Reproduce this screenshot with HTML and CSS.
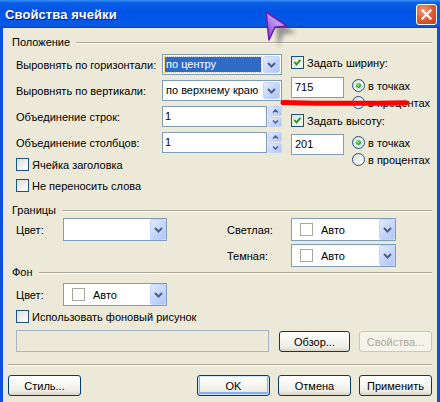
FILE: index.html
```html
<!DOCTYPE html>
<html lang="ru">
<head>
<meta charset="utf-8">
<title>Свойства ячейки</title>
<link rel="stylesheet" href="styles.css">
</head>
<body>
<div class="window">
  <div class="titlebar">
    <span class="title">Свойства ячейки</span>
    <span class="close"><svg width="11" height="11" viewBox="0 0 11 11"><path d="M1.5 1.5 L9.5 9.5 M9.5 1.5 L1.5 9.5" stroke="#fff" stroke-width="2.2" stroke-linecap="square"/></svg></span>
  </div>
  <div class="frame">
    <div class="content">
      <div class="group-head"><span>Положение</span><i class="rule"></i></div>
      <div class="position">
        <div class="pos-left">
          <div class="row">
            <span class="lbl">Выровнять по горизонтали:</span>
            <div class="select"><span class="sel-text focused">по центру</span><span class="dd"><svg width="9" height="6" viewBox="0 0 9 6"><path d="M1 1 L4.5 4.5 L8 1" fill="none" stroke="#4D6185" stroke-width="2"/></svg></span></div>
          </div>
          <div class="row">
            <span class="lbl">Выровнять по вертикали:</span>
            <div class="select"><span class="sel-text">по верхнему краю</span><span class="dd"><svg width="9" height="6" viewBox="0 0 9 6"><path d="M1 1 L4.5 4.5 L8 1" fill="none" stroke="#4D6185" stroke-width="2"/></svg></span></div>
          </div>
          <div class="row">
            <span class="lbl">Объединение строк:</span>
            <div class="spin"><span class="spin-text">1</span><span class="spin-btns"><span class="sb"><svg width="7" height="4" viewBox="0 0 7 4"><path d="M1 3.5 L3.5 1 L6 3.5" fill="none" stroke="#4D6185" stroke-width="1.5"/></svg></span><span class="sb"><svg width="7" height="4" viewBox="0 0 7 4"><path d="M1 0.5 L3.5 3 L6 0.5" fill="none" stroke="#4D6185" stroke-width="1.5"/></svg></span></span></div>
          </div>
          <div class="row">
            <span class="lbl">Объединение столбцов:</span>
            <div class="spin"><span class="spin-text">1</span><span class="spin-btns"><span class="sb"><svg width="7" height="4" viewBox="0 0 7 4"><path d="M1 3.5 L3.5 1 L6 3.5" fill="none" stroke="#4D6185" stroke-width="1.5"/></svg></span><span class="sb"><svg width="7" height="4" viewBox="0 0 7 4"><path d="M1 0.5 L3.5 3 L6 0.5" fill="none" stroke="#4D6185" stroke-width="1.5"/></svg></span></span></div>
          </div>
          <div class="cbrow"><span class="cb"></span><span>Ячейка заголовка</span></div>
          <div class="cbrow second"><span class="cb"></span><span>Не переносить слова</span></div>
        </div>
        <div class="pos-right">
          <div class="cbrow"><span class="cb"><svg width="11" height="11" viewBox="0 0 11 11"><path d="M2.5 5 L4.5 7.5 L8.5 2.8" fill="none" stroke="#21A121" stroke-width="2"/></svg></span><span>Задать ширину:</span></div>
          <div class="sizerow">
            <span class="num">715</span>
            <div class="radios">
              <div class="rrow"><span class="radio on"></span><span>в точках</span></div>
              <div class="rrow"><span class="radio"></span><span>в процентах</span></div>
            </div>
          </div>
          <div class="cbrow gap5"><span class="cb"><svg width="11" height="11" viewBox="0 0 11 11"><path d="M2.5 5 L4.5 7.5 L8.5 2.8" fill="none" stroke="#21A121" stroke-width="2"/></svg></span><span>Задать высоту:</span></div>
          <div class="sizerow gap7">
            <span class="num">201</span>
            <div class="radios">
              <div class="rrow"><span class="radio on"></span><span>в точках</span></div>
              <div class="rrow"><span class="radio"></span><span>в процентах</span></div>
            </div>
          </div>
        </div>
      </div>

      <div class="group-head borders-head"><span>Границы</span><i class="rule"></i></div>
      <div class="borders">
        <span class="lbl">Цвет:</span>
        <div class="color"><span class="ctext"></span><span class="dd tall"><svg width="9" height="6" viewBox="0 0 9 6"><path d="M1 1 L4.5 4.5 L8 1" fill="none" stroke="#4D6185" stroke-width="2"/></svg></span></div>
        <span></span>
        <span class="lbl">Светлая:</span>
        <div class="color"><span class="swatch"></span><span class="ctext">Авто</span><span class="dd tall"><svg width="9" height="6" viewBox="0 0 9 6"><path d="M1 1 L4.5 4.5 L8 1" fill="none" stroke="#4D6185" stroke-width="2"/></svg></span></div>
        <span></span><span></span><span></span>
        <span class="lbl">Темная:</span>
        <div class="color"><span class="swatch"></span><span class="ctext">Авто</span><span class="dd tall"><svg width="9" height="6" viewBox="0 0 9 6"><path d="M1 1 L4.5 4.5 L8 1" fill="none" stroke="#4D6185" stroke-width="2"/></svg></span></div>
      </div>

      <div class="group-head bg-head"><span>Фон</span><i class="rule"></i></div>
      <div class="bgrow">
        <span class="lbl">Цвет:</span>
        <div class="color"><span class="swatch"></span><span class="ctext">Авто</span><span class="dd tall"><svg width="9" height="6" viewBox="0 0 9 6"><path d="M1 1 L4.5 4.5 L8 1" fill="none" stroke="#4D6185" stroke-width="2"/></svg></span></div>
      </div>
      <div class="cbrow bgcb"><span class="cb"></span><span>Использовать фоновый рисунок</span></div>
      <div class="filerow">
        <span class="file"></span>
        <span class="btn browse">Обзор...</span>
        <span class="btn disabled props">Свойства...</span>
      </div>
      <div class="sep"></div>
      <div class="footer">
        <span class="btn">Стиль...</span>
        <div class="actions">
          <span class="btn default">OK</span>
          <span class="btn">Отмена</span>
          <span class="btn">Применить</span>
        </div>
      </div>
    </div>
  </div>

  <svg class="cursor" width="40" height="40" viewBox="0 0 40 40">
    <defs>
      <filter id="blur" x="-50%" y="-50%" width="200%" height="200%"><feGaussianBlur stdDeviation="2"/></filter>
      <linearGradient id="pg" x1="1" y1="0" x2="0" y2="1">
        <stop offset="0" stop-color="#E2D2FA"/>
        <stop offset="0.5" stop-color="#B890EE"/>
        <stop offset="1" stop-color="#7A2CC8"/>
      </linearGradient>
    </defs>
    <polygon points="10,8 31,22 19,23 13,36" fill="#555" opacity="0.55" filter="url(#blur)" transform="translate(5,3)"/>
    <polygon points="6,4 27,18 15,19 9,32" fill="url(#pg)" stroke="#6A1FB0" stroke-width="1.6" stroke-linejoin="round"/>
  </svg>

  <svg class="redline" width="130" height="10" viewBox="0 0 130 10">
    <path d="M3 4.5 C 40 5.5, 90 5.5, 126 4.8" fill="none" stroke="#FF0000" stroke-width="5" stroke-linecap="round"/>
  </svg>
</div>
</body>
</html>
```

FILE: styles.css
```css
* { box-sizing: border-box; }
html, body { margin: 0; padding: 0; }
body {
  width: 440px;
  height: 402px;
  overflow: hidden;
  background: #ECE9D8;
  font-family: "Liberation Sans", Arial, sans-serif;
  font-size: 11px;
  color: #000;
}
.window {
  position: relative;
  width: 440px;
  height: 402px;
  display: flex;
  flex-direction: column;
}
.titlebar {
  height: 28px;
  flex: none;
  display: flex;
  align-items: center;
  justify-content: space-between;
  padding: 0 3px 0 5px;
  background: linear-gradient(to bottom, #3A8EF8 0%, #0A5FE6 10%, #0054E3 40%, #0058E8 80%, #0A5AE0 90%, #0840C8 100%);
}
.title {
  color: #fff;
  font-weight: bold;
  font-size: 13px;
  text-shadow: 1px 1px 0 #0A1E8A;
  letter-spacing: 0.1px;
}
.close {
  width: 21px;
  height: 21px;
  margin-top: 1px;
  border: 1px solid #fff;
  border-radius: 3px;
  background: radial-gradient(circle at 35% 30%, #EE9C80 0%, #E0603C 45%, #C23A14 100%);
  display: flex;
  align-items: center;
  justify-content: center;
}
.frame {
  flex: 1;
  background: #ECE9D8;
  border-left: 3px solid #0B4FDF;
  border-right: 3px solid #0B4FDF;
}
.content {
  padding: 8px 5px 0 9px;
  display: flex;
  flex-direction: column;
}
.group-head {
  display: flex;
  align-items: center;
  height: 13px;
  line-height: 13px;
}
.rule {
  flex: 1;
  margin-left: 6px;
  height: 2px;
  border-top: 1px solid #ACA899;
  border-bottom: 1px solid #fff;
}
.position {
  display: flex;
  padding-left: 4px;
  margin-top: 5px;
}
.pos-left {
  width: 266px;
  display: flex;
  flex-direction: column;
}
.row {
  display: flex;
  align-items: center;
  height: 21px;
  margin-bottom: 5px;
}
.lbl { width: 146px; white-space: nowrap; }
.select {
  width: 120px;
  height: 21px;
  border: 1px solid #7F9DB9;
  background: #fff;
  display: flex;
  align-items: center;
}
.sel-text {
  flex: 1;
  height: 15px;
  line-height: 15px;
  margin: 0 2px 0 2px;
  padding-left: 1px;
  white-space: nowrap;
  overflow: hidden;
}
.sel-text.focused {
  background: #316AC5;
  color: #fff;
  outline: 1px dotted #F0B840;
}
.dd {
  width: 17px;
  height: 17px;
  margin-right: 1px;
  border: 1px solid #C3D3FD;
  border-radius: 2px;
  background: linear-gradient(135deg, #E2EAFE 0%, #C6D6FC 50%, #B0C6F6 100%);
  display: flex;
  align-items: center;
  justify-content: center;
  flex: none;
}
.dd.tall {
  width: 16px;
  height: 21px;
  margin-right: 0;
}
.spin {
  width: 120px;
  height: 21px;
  display: flex;
}
.spin-text {
  width: 105px;
  border: 1px solid #7F9DB9;
  background: #fff;
  padding-left: 2px;
  line-height: 19px;
}
.spin-btns {
  width: 14px;
  margin-left: 1px;
  display: flex;
  flex-direction: column;
  gap: 1px;
}
.sb {
  flex: 1;
  border: 1px solid #C3D3FD;
  border-radius: 2px;
  background: linear-gradient(135deg, #E2EAFE 0%, #C6D6FC 50%, #B0C6F6 100%);
  display: flex;
  align-items: center;
  justify-content: center;
}
.cbrow {
  display: flex;
  align-items: center;
  height: 13px;
  gap: 3px;
  white-space: nowrap;
}
.cbrow.second { margin-top: 8px; }
.cb {
  width: 13px;
  height: 13px;
  flex: none;
  border: 1px solid #1C5180;
  background: linear-gradient(135deg, #DCDCD7 0%, #F3F3F1 60%, #fff 100%);
  display: flex;
  align-items: center;
  justify-content: center;
}
.pos-right {
  margin-left: 9px;
  padding-top: 2px;
  display: flex;
  flex-direction: column;
}
.sizerow {
  display: flex;
  margin-top: 8px;
}
.sizerow.gap7 { margin-top: 7px; }
.cbrow.gap5 { margin-top: 5px; }
.num {
  width: 53px;
  height: 21px;
  border: 1px solid #7F9DB9;
  background: #fff;
  padding-left: 3px;
  line-height: 19px;
}
.radios {
  margin-left: 8px;
  margin-top: 2px;
  display: flex;
  flex-direction: column;
  gap: 4px;
}
.rrow {
  display: flex;
  align-items: center;
  height: 13px;
  gap: 3px;
  white-space: nowrap;
}
.radio {
  width: 13px;
  height: 13px;
  border-radius: 50%;
  border: 1px solid #1C5180;
  background: linear-gradient(135deg, #DCDCD7 0%, #F3F3F1 60%, #fff 100%);
  display: flex;
  align-items: center;
  justify-content: center;
}
.radio.on::after {
  content: "";
  width: 5px;
  height: 5px;
  border-radius: 50%;
  background: radial-gradient(circle at 40% 35%, #8EE88A 0%, #2DB52A 55%, #169A14 100%);
}
.borders-head { margin-top: 12px; }
.borders {
  display: grid;
  grid-template-columns: 47px 104px 60px 64px 105px;
  grid-template-rows: 23px 23px;
  row-gap: 3px;
  align-items: center;
  padding-left: 4px;
  margin-top: 1px;
}
.borders .lbl, .bgrow .lbl { width: auto; }
.color {
  height: 23px;
  border: 1px solid #7F9DB9;
  background: #fff;
  display: flex;
  align-items: center;
}
.swatch {
  width: 13px;
  height: 13px;
  margin-left: 8px;
  border: 1px solid #ACA899;
  background: #fff;
  flex: none;
}
.ctext {
  flex: 1;
  margin-left: 8px;
}
.bg-head { margin-top: -1px; }
.bgrow {
  display: grid;
  grid-template-columns: 47px 104px;
  align-items: center;
  padding-left: 4px;
  margin-top: 4px;
}
.bgrow .color { height: 23px; }
.bgcb { margin-top: 4px; padding-left: 4px; }
.filerow {
  display: flex;
  align-items: flex-end;
  margin-top: 7px;
  padding-left: 4px;
}
.file {
  width: 253px;
  height: 22px;
  border: 1px solid #A5B4C8;
  background: #ECE9D8;
}
.btn {
  width: 73px;
  height: 21px;
  border: 1px solid #003C74;
  border-radius: 3px;
  background: linear-gradient(to bottom, #FFFFFF 0%, #F7F7F3 40%, #EEEDE5 80%, #D8D2C6 100%);
  display: flex;
  align-items: center;
  justify-content: center;
  white-space: nowrap;
}
.browse { width: 71px; margin-left: 10px; }
.props { margin-left: 9px; }
.btn.disabled {
  border-color: #C9C7BA;
  background: #F5F4EA;
  color: #ACA899;
}
.btn.default {
  box-shadow: inset 0 0 0 1px #CEE7FF, inset 0 -1px 0 2px #89ADE4;
}
.sep {
  margin: 12px 0 0 -4px;
  height: 2px;
  border-top: 1px solid #ACA899;
  border-bottom: 1px solid #fff;
}
.footer {
  display: flex;
  margin: 9px 0 0 -4px;
}
.actions {
  margin-left: auto;
  display: flex;
  gap: 8px;
}
.cursor {
  position: absolute;
  left: 260px;
  top: 8px;
}
.redline {
  position: absolute;
  left: 280px;
  top: 98px;
}
```
